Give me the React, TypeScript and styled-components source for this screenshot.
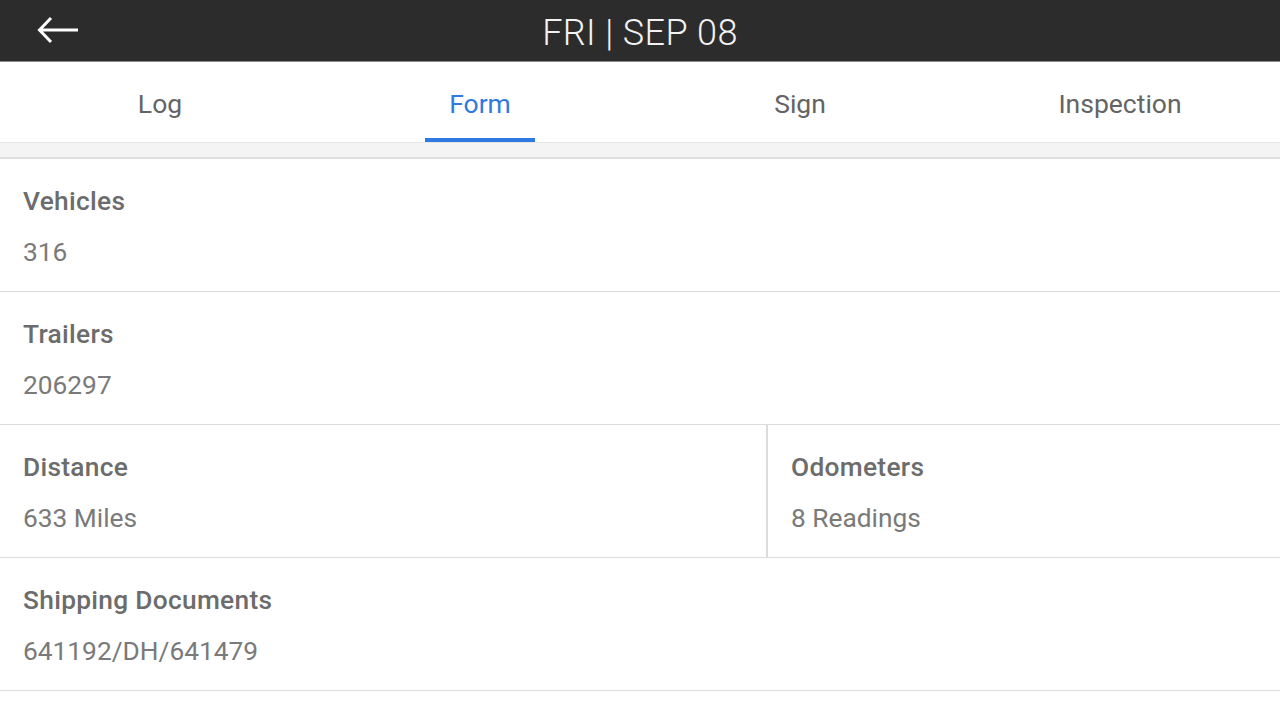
import styled, { createGlobalStyle } from "styled-components";

const GlobalStyle = createGlobalStyle`
  html, body {
    margin: 0;
    padding: 0;
    background: #ffffff;
    font-family: Roboto, "Noto Sans", sans-serif;
  }
`;

const Page = styled.div`
  width: 1280px;
  height: 719px;
  overflow: hidden;
  background: #ffffff;
`;

const Header = styled.header`
  height: 61px;
  background: #2c2c2c;
  border-bottom: 1px solid #8a8a8a;
  display: grid;
  grid-template-columns: 120px 1fr 120px;
  align-items: center;
`;

const BackButton = styled.button`
  background: none;
  border: none;
  padding: 0 0 0 37px;
  height: 100%;
  display: flex;
  align-items: center;
  cursor: pointer;
  margin-top: -1px;
`;

const Title = styled.h1`
  margin: 0;
  text-align: center;
  color: #f2f2f2;
  font-size: 36px;
  font-weight: 300;
  letter-spacing: 0.4px;
  margin-top: 5px;
`;

const Tabs = styled.nav`
  height: 80px;
  display: grid;
  grid-template-columns: repeat(4, 1fr);
  background: #ffffff;
`;

const Tab = styled.div<{ $active?: boolean }>`
  position: relative;
  display: flex;
  align-items: center;
  justify-content: center;
  font-size: 26.5px;
  color: ${(p) => (p.$active ? "#2f7ae0" : "#646464")};
  padding-top: 2px;

  &::after {
    content: "";
    display: ${(p) => (p.$active ? "block" : "none")};
    position: absolute;
    left: 50%;
    bottom: 0;
    width: 110px;
    margin-left: -55px;
    height: 4px;
    background: #2f7ae0;
  }
`;

const Band = styled.div`
  height: 14px;
  background: #f4f4f4;
  border-top: 1px solid #e4e4e4;
  border-bottom: 2px solid #dedede;
`;

const Row = styled.div<{ $split?: boolean }>`
  display: grid;
  grid-template-columns: ${(p) => (p.$split ? "766px 1fr" : "1fr")};
  border-bottom: 1px solid #dcdcdc;
  height: 132px;
`;

const Cell = styled.div<{ $divider?: boolean }>`
  padding: 27px 23px 0;
  border-left: ${(p) => (p.$divider ? "2px solid #dcdcdc" : "none")};
`;

const Label = styled.div`
  font-size: 26.3px;
  font-weight: 500;
  color: #6c6c6c;
  line-height: 30px;
  letter-spacing: 0.3px;
`;

const Value = styled.div`
  margin-top: 21px;
  font-size: 26.3px;
  color: #7a7a7a;
  line-height: 30px;
`;

const ArrowIcon = () => (
  <svg width="42" height="28" viewBox="0 0 42 28" fill="none">
    <path
      d="M41 14H3M14 2L2.5 14L14 26"
      stroke="#ffffff"
      strokeWidth="3"
      strokeLinecap="butt"
      strokeLinejoin="miter"
    />
  </svg>
);

const rows: { label: string; value: string }[][] = [
  [{ label: "Vehicles", value: "316" }],
  [{ label: "Trailers", value: "206297" }],
  [
    { label: "Distance", value: "633 Miles" },
    { label: "Odometers", value: "8 Readings" },
  ],
  [{ label: "Shipping Documents", value: "641192/DH/641479" }],
];

const App = () => {
  return (
    <Page>
      <GlobalStyle />
      <Header>
        <BackButton aria-label="Back">
          <ArrowIcon />
        </BackButton>
        <Title>FRI | SEP 08</Title>
        <div />
      </Header>
      <Tabs>
        <Tab>Log</Tab>
        <Tab $active>Form</Tab>
        <Tab>Sign</Tab>
        <Tab>Inspection</Tab>
      </Tabs>
      <Band />
      {rows.map((cells, i) => (
        <Row key={i} $split={cells.length > 1}>
          {cells.map((c, j) => (
            <Cell key={c.label} $divider={j > 0}>
              <Label>{c.label}</Label>
              <Value>{c.value}</Value>
            </Cell>
          ))}
        </Row>
      ))}
    </Page>
  );
};

export default App;
